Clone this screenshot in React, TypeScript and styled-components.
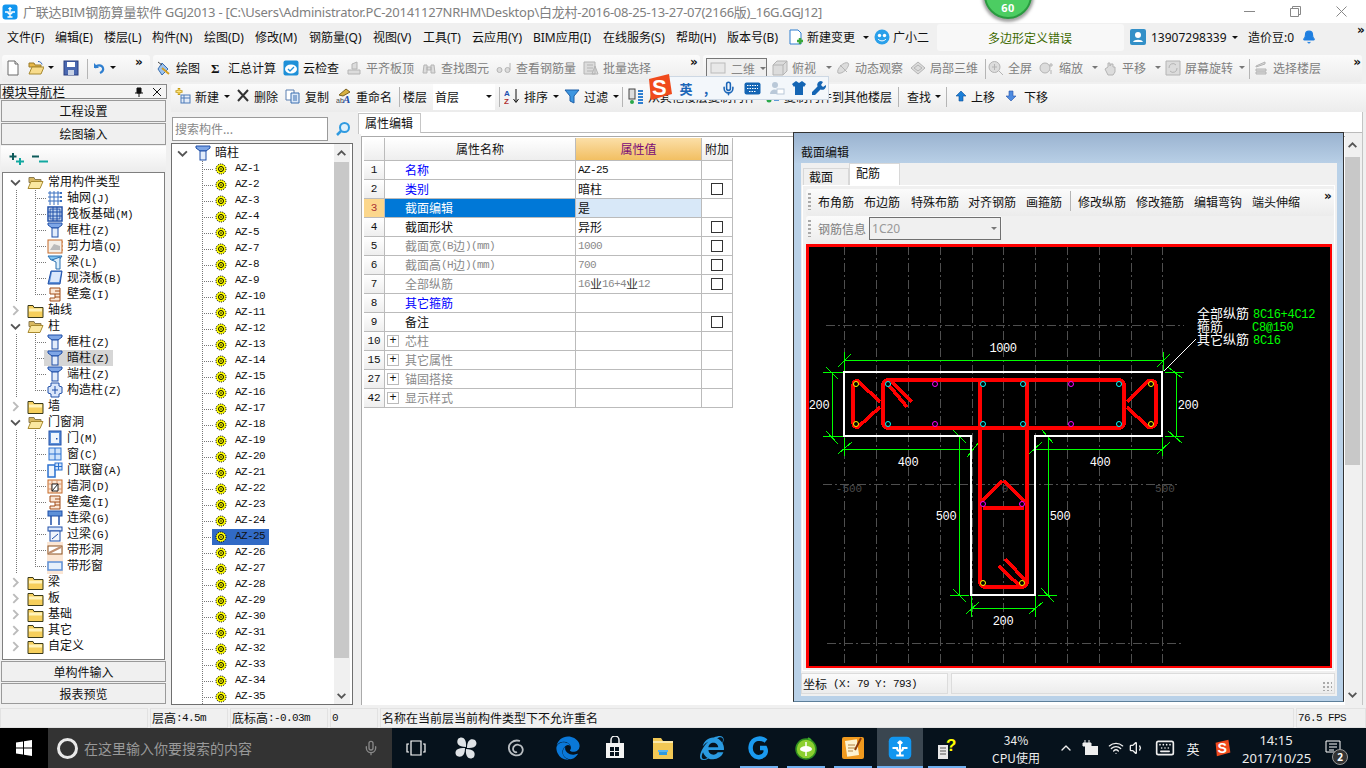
import React from 'react';
import styled, { createGlobalStyle } from 'styled-components';
import { FaEdge, FaInternetExplorer } from 'react-icons/fa';
import { ChevronUp, Volume1, Wifi, Keyboard, Mic, Bell } from 'lucide-react';

const CJK = `"Noto Sans CJK SC", "Noto Sans", sans-serif`;
const UI = `"Noto Sans", "Noto Sans CJK SC", sans-serif`;
const MONO = `"Liberation Mono", "Noto Sans CJK SC", monospace`;

const Global = createGlobalStyle`
  html, body { margin: 0; padding: 0; background: #f0f0f0; overflow: hidden; }
  body { font-family: ${CJK}; font-size: 12px; color: #111; }
  * { box-sizing: border-box; }
`;

const Root = styled.div`
  position: relative; width: 1366px; height: 768px; overflow: hidden;
  display: flex; flex-direction: column; background: #f0f0f0;
`;
const I = styled.svg<{ $s?: number }>`
  flex: none; width: ${p => p.$s ?? 16}px; height: ${p => p.$s ?? 16}px; display: block;
`;
const Gap = styled.span<{ $w: number }>`flex: none; width: ${p => p.$w}px;`;

/* ---------- title bar ---------- */
const TitleBar = styled.div`
  height: 23px; background: #fff; display: flex; align-items: center; padding-left: 2px; flex: none;
`;
const TitleText = styled.div`
  margin-left: 5px; color: #808080; font-family: ${UI}; font-size: 13px; white-space: nowrap; letter-spacing: -0.25px;
`;
const WinBtns = styled.div`margin-left: auto; display: flex; color: #777; padding-right: 2px;`;
const WinBtn = styled.div`width: 46px; height: 23px; display: flex; align-items: center; justify-content: center;`;
const Badge60 = styled.div`
  position: absolute; left: 984px; top: -29px; width: 48px; height: 48px; border-radius: 50%;
  background: #4ccd62; border: 2px solid #2a9a40; box-shadow: 0 1px 3px 2px rgba(90,90,90,.55);
  color: #fff; font: bold 11px "Noto Sans", sans-serif; display: flex; align-items: flex-end; justify-content: center; padding-bottom: 2px; letter-spacing: .5px;
`;

/* ---------- menu ---------- */
const MenuBar = styled.div`
  height: 31px; flex: none; display: flex; align-items: center; padding: 0 0 3px 7px; background: #f0f0f0;
  font-family: ${UI}; font-size: 12px; white-space: nowrap;
`;
const MenuItem = styled.div<{ $w: number; $gap?: number }>`width: ${p => p.$w}px; flex: none; display: flex; align-items: center; gap: ${p => p.$gap ?? 3}px;`;
const Notice = styled.div`
  width: 187px; height: 27px; flex: none; background: #f8f8f8; border-radius: 3px; color: #3e6a00; font-family: ${CJK};
  padding-left: 51px; display: flex; align-items: center; margin-right: 6px; font-size: 12px;
`;
const Caret = styled.span<{ $ml?: number; $c?: string }>`
  flex: none; display: inline-block; width: 0; height: 0; margin-left: ${p => p.$ml ?? 4}px;
  border-left: 3px solid transparent; border-right: 3px solid transparent; border-top: 3px solid ${p => p.$c ?? '#111'};
`;
const More = styled.span<{ $ml?: string; $mr?: number }>`
  flex: none; font: bold 12px/8px "DejaVu Sans", sans-serif; color: #111; letter-spacing: -1px; align-self: flex-start; margin-top: 3px;
  margin-left: ${p => p.$ml ?? '0'}; margin-right: ${p => p.$mr ?? 0}px;
`;

/* ---------- toolbars ---------- */
const Toolbar1 = styled.div`
  height: 30px; flex: none; display: flex; gap: 3px; padding: 1px 4px 2px 2px; white-space: nowrap;
`;
const Band = styled.div<{ $w?: number }>`
  ${p => p.$w ? `width:${p.$w}px; flex:none;` : 'flex:1;'}
  display: flex; align-items: center; padding-left: 3px; border-radius: 3px;
  background: linear-gradient(#fbfbfb, #ececec);
`;
const Tool = styled.div<{ $w: number; $off?: boolean }>`
  width: ${p => p.$w}px; flex: none; display: flex; align-items: center; gap: 4px; height: 22px; padding-bottom: 2px;
  color: ${p => p.$off ? '#808080' : '#111'};
`;
const ToolLabel = styled.span<{ $ml: number }>`margin-left: ${p => p.$ml}px;`;
const Sep = styled.span<{ $m?: number; $mr?: number }>`
  flex: none; width: 1px; height: 20px; background: #b5b5b5; margin: 0 ${p => p.$mr ?? p.$m ?? 5}px 0 ${p => p.$m ?? 5}px;
`;
const ViewCombo = styled.div`
  width: 61px; height: 22px; flex: none; border: 1px solid #777; display: flex; align-items: center; color: #888;
  padding: 0 0 1px 3px; gap: 5px; background: #efefef; margin-right: 5px;
`;

/* ---------- body ---------- */
const Body = styled.div`height: 621px; flex: none; display: flex;`;
const Nav = styled.div`width: 167px; flex: none; display: flex; flex-direction: column; padding: 0 1px;`;
const NavHead = styled.div`
  height: 15px; flex: none; border: 1px solid #8a8a8a; margin: 0 -1px; background: #f4f4f4; display: flex; align-items: center; padding-left: 1px; font-size: 12.6px; line-height: 12px;
`;
const NavHeadIcons = styled.div`margin-left: auto; display: flex; gap: 8px; padding-right: 4px; align-items: center;`;
const NavBtn = styled.div<{ $h?: number }>`
  height: ${p => p.$h ?? 22}px; flex: none; margin-top: 1px; border: 1px solid #9a9a9a; background: #f0f0f0;
  display: flex; align-items: center; justify-content: center; font-size: 12px; padding-bottom: 1px;
`;
const NavTools = styled.div`
  height: 26px; flex: none; display: flex; align-items: center; gap: 3px; padding-left: 7px; background: linear-gradient(#fff,#ececec); margin-top: 1px;
`;
const TreeBox = styled.div`
  height: 488px; flex: none; border: 1px solid #7f7f7f; background: #fff; margin: 0 1px; overflow: hidden; font-size: 12px; padding-top: 1px;
`;
const Row = styled.div<{ $lv1?: boolean; $lv2?: boolean; $last?: boolean }>`
  height: 16px; display: flex; align-items: center; white-space: nowrap;
  background-repeat: no-repeat;
  background-image:
    ${p => p.$lv1 ? 'repeating-linear-gradient(to bottom,#777 0 1px,transparent 1px 2px)' : 'none'},
    ${p => p.$lv2 ? 'repeating-linear-gradient(to bottom,#777 0 1px,transparent 1px 2px)' : 'none'},
    ${p => p.$lv2 ? 'repeating-linear-gradient(to right,#777 0 1px,transparent 1px 2px)' : 'none'};
  background-size: 1px 16px, 1px ${p => p.$last ? '8px' : '16px'}, 11px 1px;
  background-position: 13px 0, 32px 0, 32px 8px;
`;
const ChevBox = styled.span`flex: none; width: 12px; margin-left: 6px; display: flex; justify-content: center;`;
const FolderName = styled.span`margin-left: 4px; height: 16px; line-height: 14px;`;
const LeafWrap = styled.span<{ $sel?: boolean }>`
  flex: none; margin-left: 41px; padding: 0 4px 0 3px; height: 16px; display: flex; align-items: center;
  background: ${p => p.$sel ? '#d6d6d6' : 'transparent'};
`;
const LeafName = styled.span`margin-left: 4px; height: 16px; line-height: 14px;`;
const Lat = styled.span`font-family: ${MONO}; font-size: 11px; letter-spacing: -0.6px;`;

const RightCol = styled.div`width: 1195px; margin-left: 4px; flex: none; display: flex; flex-direction: column;`;
const Toolbar2 = styled.div`
  height: 28px; flex: none; display: flex; align-items: center; padding: 0 0 2px 4px; white-space: nowrap; border-radius: 3px 0 0 0;
  background: linear-gradient(#fbfbfb, #ececec);
`;
const FloorLabel = styled.span`margin-left: 3px; flex: none; margin-bottom: 2px;`;
const FloorBox = styled.div`
  width: 62px; height: 26px; flex: none; margin-left: 6px; background: #fff; padding: 0 0 2px 2px; display: flex; align-items: center;
`;
const Work = styled.div`flex: 1; display: flex; min-height: 0;`;
const TreeCol = styled.div`width: 182px; flex: none; display: flex; flex-direction: column;`;
const SearchRow = styled.div`height: 31px; flex: none; display: flex; align-items: center; gap: 7px; padding: 2px 0 0 1px;`;
const SearchBox = styled.div`
  width: 156px; height: 24px; background: #fff; border: 1px solid #9a9a9a; color: #888; padding: 0 0 1px 2px; display: flex; align-items: center; font-size: 12px;
`;
const CompBox = styled.div`flex: 1; min-height: 0; border: 1px solid #6f6f6f; background: #fff; display: flex;`;
const CompList = styled.div`width: 162px; flex: none; padding-top: 1px; overflow: hidden;`;
const CompRoot = styled.div`height: 16px; display: flex; align-items: center; padding-left: 5px;`;
const CompRootName = styled.span`margin-left: 4px; height: 16px; line-height: 13px;`;
const CompRow = styled.div`
  height: 16px; display: flex; align-items: center; padding-left: 43px; white-space: nowrap;
  background-repeat: no-repeat;
  background-image: repeating-linear-gradient(to bottom,#777 0 1px,transparent 1px 2px), repeating-linear-gradient(to right,#777 0 1px,transparent 1px 2px);
  background-size: 1px 16px, 11px 1px; background-position: 30px 0, 30px 8px;
`;
const CompName = styled.span<{ $sel?: boolean }>`
  font-family: ${MONO}; font-size: 11px; letter-spacing: -0.6px; height: 16px; line-height: 15px; margin-left: -15px; padding: 0 4px 0 23px;
  background: ${p => p.$sel ? '#316ac5' : 'transparent'};
`;
const GearWrap = styled.span`position: relative; z-index: 1; flex: none; width: 12px; height: 12px; display: block;`;
const Scroll = styled.div<{ $w: number }>`width: ${p => p.$w}px; flex: none; background: #f0f0f0; display: flex; flex-direction: column; align-items: flex-start;`;
const SBtn = styled.div<{ $h: number }>`height: ${p => p.$h}px; flex: none; display: flex; align-items: center; justify-content: center; width: 15px;`;
const SThumb = styled.div<{ $h: number }>`height: ${p => p.$h}px; width: 15px; flex: none; background: #c8c8c8;`;
const SFill = styled.div`flex: 1;`;

const PropCol = styled.div`width: 1006px; margin-left: 4px; flex: none; display: flex; flex-direction: column; border-right: 1px solid #c4c4c4;`;
const TabStrip = styled.div`height: 21px; flex: none; display: flex; background: #fff; border-bottom: 1px solid #bbb; margin-left: 1px;`;
const TabOn = styled.div`
  width: 63px; flex: none; margin-top: 1px; height: 21px; background: #fff; border: 1px solid #c6c6c6; border-bottom: none; display: flex; align-items: center; padding: 0 0 3px 6px; font-size: 12px;
`;
const PropBody = styled.div`flex: 1; min-height: 0; display: flex; background: #fff; margin-left: 4px;`;
const GridArea = styled.div`flex: 1; border-left: 1px solid #aaa; border-top: 1px solid #aaa; margin-top: 3px; padding: 1px 0 0 2px;`;
const GRow = styled.div<{ $h?: number }>`display: flex; height: ${p => p.$h ?? 19}px;`;
const Cell = styled.div<{ $w: number; $bg?: string; $c?: string; $pl?: number }>`
  width: ${p => p.$w}px; flex: none; background: ${p => p.$bg ?? '#fff'}; color: ${p => p.$c ?? '#111'};
  border-right: 1px solid #bbb; border-bottom: 1px solid #bbb; display: flex; align-items: center;
  padding: 0 0 1px ${p => p.$pl ?? 0}px; white-space: nowrap; font-size: 12px;
`;
const HeadCell = styled(Cell)`justify-content: center;`;
const RowNum = styled(HeadCell)<{ $hot?: boolean }>`
  font-family: ${MONO}; font-size: 11px; background: ${p => p.$hot ? '#fcd78c' : 'linear-gradient(#fff,#eee)'};
  color: ${p => p.$hot ? '#a33' : '#111'};
`;
const Check = styled.span`width: 12px; height: 12px; border: 1px solid #333; background: #fff; margin-left: 9px; flex: none;`;
const PlusBox = styled.span`
  width: 12px; height: 12px; flex: none; border: 1px solid #bbb; color: #111; margin: 0 6px 0 2px; font: 12px/9px "Liberation Sans", sans-serif; text-align: center;
`;
const Mono = styled.span`font-family: ${MONO}; font-size: 11px; letter-spacing: -0.6px;`;
const RebarMark = styled.span`color: #333;`;

/* ---------- dialog ---------- */
const Dialog = styled.div`
  position: absolute; left: 793px; top: 132px; width: 551px; height: 570px; border: 1px solid #333; border-bottom-color: #5d7f9a;
  background: #b9d1e8; display: flex; flex-direction: column; z-index: 3; font-size: 12px;
`;
const DTitle = styled.div`
  height: 30px; flex: none; background: linear-gradient(#9ab3d0,#b8cfe6); padding: 10px 0 0 7px; line-height: 18px;
`;
const DInner = styled.div`height: 533px; flex: none; margin: 0 6px 0 7px; background: #f0f0f0; display: flex; flex-direction: column;`;
const DTabs = styled.div`height: 22px; flex: none; display: flex; align-items: flex-end; padding-left: 2px;`;
const DTab = styled.div<{ $on?: boolean }>`
  width: ${p => p.$on ? 51 : 46}px; height: ${p => p.$on ? 22 : 17}px; flex: none; background: ${p => p.$on ? '#fff' : '#f0f0f0'};
  border: 1px solid #d8d8d8; border-bottom: none; padding: ${p => p.$on ? '0 0 4px 6px' : '0 0 2px 5px'}; display: flex; align-items: center;
`;
const DPanel = styled.div`
  height: 486px; flex: none; margin: 0 2px 0 1px; background: #f0f0f0; border: 1px solid #fff; padding: 0 0 0 3px; display: flex; flex-direction: column;
`;
const DBar = styled.div`
  height: 27px; flex: none; margin-top: 3px; display: flex; align-items: center; white-space: nowrap; background: linear-gradient(#fbfbfb,#ececec); border-radius: 3px; padding: 0 0 3px 2px;
`;
const DBarItem = styled.span<{ $w: number }>`width: ${p => p.$w}px; flex: none;`;
const Grip = styled.span`flex: none; width: 3px; height: 17px; margin-right: 7px; background: repeating-linear-gradient(to bottom,#aaa 0 2px,transparent 2px 4px);`;
const DBar2 = styled.div`
  width: 196px; height: 28px; flex: none; display: flex; align-items: center; padding: 0 0 4px 2px; background: linear-gradient(#fbfbfb,#ececec); color: #808080; white-space: nowrap; border-radius: 3px;
`;
const RebarCombo = styled.div`
  width: 132px; height: 23px; flex: none; margin-left: 3px; border: 1px solid #707070; background: #f0f0f0; display: flex; align-items: center; justify-content: space-between; padding: 0 3px 0 2px; font-family: ${UI}; color: #999;
`;
const Canvas = styled.svg`
  width: 526px; height: 424px; display: block; flex: none; background: #000;
`;
const DStatus = styled.div`height: 21px; flex: none; margin-top: 2px; display: flex; gap: 3px;`;
const DCell = styled.div<{ $w: number }>`
  width: ${p => p.$w}px; flex: none; background: linear-gradient(#fbfbfb,#ececec); border: 1px solid #dcdcdc; display: flex; align-items: center; padding-left: 1px; position: relative;
`;
const GripC = styled.span`
  position: absolute; right: 2px; bottom: 2px; width: 10px; height: 10px;
  background: radial-gradient(circle, #aaa 1px, transparent 1.3px) 0 0/4px 4px;
`;
const Dim = styled.text`fill: #fff; font-family: ${MONO}; font-size: 12px; letter-spacing: -0.4px; text-anchor: middle;`;
const Ax = styled.text`fill: #4a4a4a; font-family: ${MONO}; font-size: 11px; text-anchor: middle;`;
const Lbl = styled.text`fill: #fff; font-family: ${CJK}; font-size: 13px;`;
const Val = styled.text`fill: #00ff00; font-family: ${MONO}; font-size: 12px; letter-spacing: -0.3px;`;

/* ---------- sogou ---------- */
const Sogou = styled.div`
  position: absolute; left: 668px; top: 76px; width: 161px; height: 24px; background: #f3f7fb; border: 1px solid #cdd8e4; z-index: 4;
  display: flex; align-items: center; padding-left: 8px; color: #1b66b8; font-weight: 700; font-size: 13px;
`;
const SogouSlot = styled.span<{ $w: number }>`width: ${p => p.$w}px; flex: none; display: flex; justify-content: center;`;
const SogouLogo = styled.div`position: absolute; left: 645px; top: 73px; width: 28px; height: 26px; z-index: 5;`;

/* ---------- status + taskbar ---------- */
const Status = styled.div`height: 20px; margin-top: 3px; flex: none; display: flex; gap: 2px; font-size: 12px;`;
const SCell = styled.div<{ $w?: number }>`
  ${p => p.$w ? `width:${p.$w}px; flex:none;` : 'flex:1;'}
  background: #f0f0f0; border: 1px solid #e2e2e2; display: flex; align-items: center; padding: 0 0 1px 1px; white-space: nowrap;
`;
const Taskbar = styled.div`height: 40px; flex: none; background: #06121c; display: flex; color: #fff; position: relative;`;
const StartBtn = styled.div`width: 48px; flex: none; background: #000; display: flex; align-items: center; justify-content: center;`;
const SearchTask = styled.div`
  width: 344px; flex: none; background: #333; display: flex; align-items: center; padding-left: 9px; color: #999; font-size: 14px; gap: 6px;
`;
const Ring = styled.span`width: 21px; height: 21px; border-radius: 50%; border: 3px solid #e8e8e8; flex: none;`;
const MicBox = styled.span`margin-left: auto; margin-right: 13px; color: #888; display: flex;`;
const TaskIcons = styled.div`display: flex; flex: none;`;
const TaskIcon = styled.div<{ $w: number; $ml?: number; $on?: boolean; $active?: boolean }>`
  width: ${p => p.$w}px; height: 40px; flex: none; margin-left: ${p => p.$ml ?? 0}px; display: flex; align-items: center; justify-content: center;
  background: ${p => p.$active ? '#3a4650' : 'transparent'};
  box-shadow: ${p => p.$on ? 'inset 0 -2px 0 #70b0f0' : 'none'};
`;
const Cpu = styled.div`
  width: 64px; flex: none; margin-left: 18px; text-align: center; font-size: 12px; line-height: 18px; padding-top: 3px; color: #eee;
`;
const Tray = styled.div`display: flex; align-items: center; flex: none; margin-left: 6px; color: #eee;`;
const TraySlot = styled.span<{ $w: number }>`width: ${p => p.$w}px; flex: none; display: flex; justify-content: center; font-size: 13px;`;
const Clock = styled.div`
  width: 68px; flex: none; text-align: center; font-family: ${UI}; font-size: 13px; line-height: 18px; padding-top: 3px; color: #eee; white-space: nowrap;
`;
const Notify = styled.div`flex: none; margin-left: 12px; width: 30px; position: relative; display: flex; align-items: center; padding-left: 3px;`;
const NotifyBadge = styled.span`
  position: absolute; left: 10px; top: 21px; width: 16px; height: 16px; border-radius: 50%; background: #333; border: 1px solid #999;
  color: #fff; font: bold 10px/14px "Noto Sans", sans-serif; text-align: center;
`;

/* ---------- icons ---------- */
const AppIcon = ({ s = 16 }: { s?: number }) => (
  <I $s={s} viewBox="0 0 16 16"><rect x=".5" y=".5" width="15" height="15" rx="3" fill="#1296ef" /><path d="M8 3v10M3 8h3a2 2 0 0 0 4 0h3M8 3.5L6.5 5M8 3.5L9.5 5M5.5 13h5" stroke="#fff" strokeWidth="1.4" fill="none" /></I>
);
const NewDoc = () => <I viewBox="0 0 16 16"><path d="M3 1h7l3 3v11H3z" fill="#fff" stroke="#6a6a6a" /><path d="M10 1v3h3" fill="#e8e8e8" stroke="#6a6a6a" /></I>;
const OpenF = () => <I viewBox="0 0 16 16"><path d="M1 3h5l1 2h6v2H1z" fill="#e7b84a" stroke="#9a7a28" /><path d="M1 14l3-7h12l-3 7z" fill="#f8dc8c" stroke="#a88a30" /><path d="M10 1.5c2 0 3.5 1 4 3" stroke="#2b5fb3" fill="none" /></I>;
const Save = () => <I viewBox="0 0 16 16"><rect x="1" y="1" width="14" height="14" fill="#4a68b0" stroke="#2a3f80" /><rect x="4" y="2" width="8" height="5" fill="#fff" /><rect x="5" y="10" width="6" height="5" fill="#c9d3e6" /></I>;
const Undo = () => <I viewBox="0 0 16 16"><path d="M4 3v5h5" fill="#2f7fd0" /><path d="M5 8c2-4 7-3 8 0 .6 2-1 4-3 5" fill="none" stroke="#2f7fd0" strokeWidth="2.2" /></I>;
const Draw = () => <I viewBox="0 0 16 16"><path d="M2 9l4-6 6 6-6 6z" fill="#9cc2ee" stroke="#3a6fb0" /><path d="M6 8l7 6" stroke="#d8a020" strokeWidth="2" /><path d="M2 2l4 3" stroke="#444" /></I>;
const SigmaI = () => <I viewBox="0 0 16 16"><text x="3" y="13" fontSize="13" fontWeight="700" fontFamily="Liberation Serif, serif" fill="#111">Σ</text></I>;
const CloudC = () => <I viewBox="0 0 16 16"><rect x=".5" y=".5" width="15" height="15" rx="2" fill="#1e90d8" /><ellipse cx="8" cy="9" rx="6" ry="4.5" fill="#fff" /><path d="M5 9l2 2 4-4" stroke="#1e90d8" strokeWidth="1.3" fill="none" /></I>;
const Gray = ({ d }: { d: string }) => <I viewBox="0 0 16 16"><path d={d} fill="#dcdcdc" stroke="#b4b4b4" /></I>;
const GFlat = 'M2 14h12v-4H2zM6 9V4l5-2v7z';
const GBino = 'M2 13l1-8h3v8zM10 13V5h3l1 8zM6 7h4v3H6z';
const GGlass = 'M1 10a2.500 2.500 0 1 0 5 0a2.500 2.500 0 1 0-5 0M9 10a2.500 2.500 0 1 0 5 0a2.500 2.500 0 1 0-5 0M14 10V3';
const GBatch = 'M1 2h11v12H1zM4 5h6M4 8h6M4 11h6M12 6l3 8H9z';
const GBox = 'M1 5l4-4h10v10l-4 4H1zM1 5h10v10M11 5l4-4';
const GOrbit = 'M3 13C1 9 9 1 13 3c3 2-5 12-10 10zM5 5l7 7';
const GLocal = 'M1 8l7-6 7 6-7 6zM4 8l4-3 4 3-4 3z';
const GZoom = 'M1 7a5.500 5.500 0 1 0 11 0a5.500 5.500 0 1 0-11 0M11 11l4 4M6.500 4v6M4 7h5';
const GScale = 'M1 8a5 5 0 1 0 10 0a5 5 0 1 0-10 0M12 3v4M10 5h4M12 10v4';
const GPan = 'M3 9l3-2V3h2v3l1-2h2v3h2v5l-2 3H6z';
const GRot = 'M1 1h14v14H1zM4 8a4 4 0 0 1 7-3M12 8a4 4 0 0 1-7 3';
const GFloor = 'M3 6l9-4v2l-9 3zM3 9h10v2H3zM3 12h10v2H3z';
const NewIt = () => <I viewBox="0 0 16 16"><rect x="6" y="7" width="9" height="8" fill="#e4ecf7" stroke="#4d7ab8" /><path d="M6 10h9M9 7v8" stroke="#4d7ab8" /><path d="M4 0v7M.5 3.500h7" stroke="#c49a10" strokeWidth="2.500" /><path d="M4 1v5M1.500 3.500h5" stroke="#ffe680" /></I>;
const CrossI = () => <I $s={14} viewBox="0 0 14 14"><path d="M2 1l10 11M12 1L2 12" stroke="#333" strokeWidth="2" /></I>;
const CopyI = () => <I viewBox="0 0 16 16"><path d="M1 2h8v10H1z" fill="#fff" stroke="#5a7fb0" /><path d="M6 5h8v10H6z" fill="#dbe8f8" stroke="#3a6fb0" /><path d="M8 8h4M8 10h4M8 12h4" stroke="#3a6fb0" /></I>;
const Rename = () => <I viewBox="0 0 16 16"><path d="M3 7l7-6 4 3-7 4z" fill="#d8b040" stroke="#7a6020" /><text x="0" y="15" fontSize="7" fontFamily="Liberation Sans" fill="#444">ab</text><text x="7" y="15" fontSize="11" fontWeight="700" fontFamily="Liberation Serif" fontStyle="italic" fill="#1f4fa8">A</text></I>;
const SortI = () => <I viewBox="0 0 16 16"><text x="0" y="8" fontSize="8" fontWeight="700" fontFamily="Liberation Sans" fill="#2050b0">A</text><text x="0" y="15.500" fontSize="8" fontWeight="700" fontFamily="Liberation Sans" fill="#b03030">Z</text><path d="M12 1v13M9.500 11l2.500 3.500 2.500-3.500" stroke="#111" fill="none" /></I>;
const Funnel = () => <I viewBox="0 0 16 16"><path d="M1 2h14l-5 6v7l-4-2V8z" fill="#3d96e0" stroke="#1d5fa8" /></I>;
const CopyFrom = () => <I viewBox="0 0 16 16"><rect x="1" y="1" width="6" height="10" fill="#ddd" stroke="#444" /><path d="M10 3h5M10 6h5M10 9h5M10 12h5M10 15h5" stroke="#2f7fd0" strokeWidth="2" /><circle cx="4" cy="14" r="2" fill="#2aa84a" /></I>;
const CopyTo = () => <I $s={14} viewBox="0 0 14 14"><path d="M8 2h5M8 5h5M8 8h5M8 11h5" stroke="#2f7fd0" strokeWidth="1.500" /><circle cx="3" cy="11" r="2.500" fill="#2aa84a" /></I>;
const Up = () => <I $s={12} viewBox="0 0 12 12"><path d="M6 1l5 5H8v5H4V6H1z" fill="#1b7fd8" stroke="#0d4f98" strokeWidth=".6" /></I>;
const Down = () => <I $s={12} viewBox="0 0 12 12"><path d="M6 11L1 6h3V1h4v5h3z" fill="#4d8be0" stroke="#2855a8" strokeWidth=".6" /></I>;
const Chev = ({ open, s = 11 }: { open: boolean; s?: number }) => (
  <I $s={s} viewBox="0 0 10 10"><path d={open ? 'M1 3l4 4 4-4' : 'M3 1l4 4-4 4'} stroke={open ? '#555' : '#bbb'} strokeWidth="1.700" fill="none" /></I>
);
const FolderC = () => <I $s={17} viewBox="0 0 17 16"><path d="M1 3h5l1 2h9v10H1z" fill="#f6cf5c" stroke="#3a3a1a" /><path d="M2 6h13v3H2z" fill="#fff2b8" /></I>;
const FolderO = () => <I $s={17} viewBox="0 0 17 16"><path d="M2 3h5l1 2h6v3H2z" fill="#d8b860" stroke="#8a7a50" /><path d="M1 14l3-7h12l-3 7z" fill="#fbe8a0" stroke="#a88a30" /></I>;
const Col = () => <I viewBox="0 0 16 16"><path d="M1 1h14v2l-4 3H5L1 3z" fill="#7ea6e6" stroke="#1f4fa8" /><rect x="5" y="6" width="6" height="9" fill="#e2ecfb" stroke="#1f4fa8" /></I>;
const GridI = () => <I viewBox="0 0 16 16"><path d="M3 1v14M7 1v14M11 1v14M1 3h12M1 7h12M1 11h12" stroke="#3a70c0" /><rect x="13" y="2" width="2" height="2" fill="#3a70c0" /><rect x="13" y="6" width="2" height="2" fill="#3a70c0" /><rect x="13" y="10" width="2" height="2" fill="#3a70c0" /></I>;
const Raft = () => <I viewBox="0 0 16 16"><rect x="1" y="1" width="14" height="14" fill="#fff" stroke="#1f4fa8" strokeWidth="1.500" /><rect x="3" y="3" width="10" height="10" fill="#bcd2ee" stroke="#1f4fa8" /><path d="M6 1v14M10 1v14M1 6h14M1 10h14" stroke="#1f4fa8" /></I>;
const Shear = () => <I viewBox="0 0 16 16"><rect x="1" y="2" width="14" height="13" fill="#f4f0ea" stroke="#c66a28" /><path d="M3 12h10V8L7 6z" fill="#bbb" /><path d="M15 4h1M15 8h1M15 12h1" stroke="#c66a28" /></I>;
const Beam = () => <I viewBox="0 0 16 16"><path d="M1 2h14l-3 4H4z" fill="#7ec0ee" stroke="#2a70b0" /><path d="M5 6l8-3v12H9V8z" fill="#dbeefb" stroke="#2a70b0" /></I>;
const Slab = () => <I viewBox="0 0 16 16"><path d="M4 1h11l-2 13H1z" fill="#5d90d8" stroke="#1f4fa8" /><path d="M5 2h9l-2 10H3z" fill="#dbe7fb" /></I>;
const Niche = () => <I viewBox="0 0 16 16"><path d="M3 2h10v13H3v-3h5V8H3z" fill="#fbe6d4" stroke="#a04d18" /><path d="M8 5h5M8 8h5M8 11h5" stroke="#a04d18" /></I>;
const Constr = () => <I viewBox="0 0 16 16"><path d="M4 1h8v3l3 1v6l-3 1v3H4v-3l-3-1V5l3-1z" fill="#dbe7fb" stroke="#1f4fa8" /><path d="M8 4v8M5 8h6" stroke="#1f4fa8" /></I>;
const Door = () => <I viewBox="0 0 16 16"><rect x="2" y="1" width="12" height="14" fill="#5d90d8" stroke="#1f4fa8" /><rect x="4" y="3" width="8" height="10" fill="#f0f5fc" /><rect x="9" y="8" width="1.500" height="1.500" fill="#1f4fa8" /></I>;
const WinI = () => <I viewBox="0 0 16 16"><rect x="2" y="2" width="12" height="12" fill="#cfe3fa" stroke="#2a70d0" /><path d="M8 2v12M2 8h12" stroke="#2a70d0" /></I>;
const DoorWin = () => <I viewBox="0 0 16 16"><rect x="1" y="3" width="7" height="12" fill="#f0f5fc" stroke="#2a70d0" strokeWidth="1.500" /><rect x="8" y="1" width="7" height="7" fill="#cfe3fa" stroke="#2a70d0" /><path d="M11.500 1v7M8 4.500h7" stroke="#2a70d0" /></I>;
const Hole = () => <I viewBox="0 0 16 16"><rect x="1" y="2" width="14" height="13" fill="#fbe6d4" stroke="#c66a28" /><path d="M5 2v13M10 2v13M1 6h14M1 11h14" stroke="#d8936a" /><path d="M5 13V6h6v7zM5 13l6-7" stroke="#222" fill="#fff" /></I>;
const LBeam = () => <I viewBox="0 0 16 16"><rect x="1" y="1" width="14" height="5" fill="#5d90d8" stroke="#1f4fa8" /><path d="M4 6v9M12 6v9" stroke="#1f4fa8" strokeWidth="1.500" /></I>;
const Lintel = () => <I viewBox="0 0 16 16"><rect x="1" y="1" width="14" height="4" fill="#dbe7fb" stroke="#1f4fa8" /><rect x="3" y="5" width="10" height="10" fill="#f0f5fc" stroke="#1f4fa8" /><path d="M5 13l6-5" stroke="#1f4fa8" /></I>;
const BandH = () => <I viewBox="0 0 16 16"><rect x="0" y="0" width="16" height="16" fill="#fbe6d4" /><rect x="1" y="4" width="14" height="8" fill="#fff" stroke="#8a5020" /><path d="M2 11l12-6" stroke="#c09070" strokeWidth="2" /></I>;
const BandW = () => <I viewBox="0 0 16 16"><rect x="0" y="0" width="16" height="16" fill="#fbe6d4" /><rect x="1" y="4" width="14" height="8" fill="#e6f0fb" stroke="#5d90d8" strokeWidth="1.500" /></I>;
const Gear = () => (
  <I $s={12} viewBox="0 0 12 12"><circle cx="6" cy="6" r="5" fill="#ffff00" stroke="#000" strokeDasharray="1.200 1" /><circle cx="6" cy="6" r="2.500" fill="#ffff00" stroke="#000" /><circle cx="6" cy="6" r=".8" fill="#000" /></I>
);
const PlusPlus = () => <I $s={20} viewBox="0 0 20 20"><path d="M5 4v7M1.500 7.500h7" stroke="#0d5a5a" strokeWidth="2" /><path d="M12 9v7M8 12.500h8" stroke="#12a8a0" strokeWidth="2" /></I>;
const MinusMinus = () => <I $s={20} viewBox="0 0 20 20"><path d="M1 7.500h7" stroke="#0d5a5a" strokeWidth="2" /><path d="M8 12.500h9" stroke="#12a8a0" strokeWidth="2" /></I>;
const Glass = () => <I viewBox="0 0 16 16"><circle cx="9.500" cy="6.500" r="4.500" fill="#dff0fb" stroke="#2f9ae0" strokeWidth="2" /><path d="M6 10l-4 4" stroke="#2f9ae0" strokeWidth="2.500" /></I>;
const Pin = () => <I $s={10} viewBox="0 0 10 10"><path d="M3 1h4v5H3zM1 6h8M5 6v4" stroke="#111" fill="#111" /></I>;
const CloseX = () => <I $s={10} viewBox="0 0 10 10"><path d="M1 1l8 8M9 1L1 9" stroke="#111" /></I>;
const DocGreen = () => <I viewBox="0 0 16 16"><path d="M2 1h8l3 3v11H2z" fill="#fff" stroke="#2f7fd0" /><path d="M9 12h6M12 9v6" stroke="#3aa83a" strokeWidth="2.500" /></I>;
const Mascot = () => <I viewBox="0 0 16 16"><circle cx="8" cy="8" r="7.500" fill="#2aa0ea" /><circle cx="5.500" cy="6.500" r="1.700" fill="#fff" /><circle cx="10.500" cy="6.500" r="1.700" fill="#fff" /><path d="M4 10c2 2.500 6 2.500 8 0" stroke="#fff" fill="none" /></I>;
const UserI = () => <I viewBox="0 0 16 16"><rect width="16" height="16" rx="2" fill="#3390c8" /><circle cx="8" cy="6" r="3" fill="#fff" /><path d="M3 13c1-3 9-3 10 0z" fill="#fff" /></I>;

const WinLogo = () => <I viewBox="0 0 16 16"><path d="M0 2.500l7-1v6H0zM8 1.300L16 0v7.500H8zM0 8.500h7v6l-7-1zM8 8.500h8V16L8 14.700z" fill="#fff" /></I>;
const TaskView = () => <I $s={20} viewBox="0 0 20 20"><path d="M5 3h10v14H5zM3 6H1v8h2M17 6h2v8h-2" stroke="#fff" fill="none" strokeWidth="1.200" /></I>;
const Fan = () => <I $s={24} viewBox="0 0 24 24"><path d="M12 11C4 11 2 7 4 3c3-3 9-2 8 8zM13 12c0-8 4-10 8-8 3 3 2 9-8 8zM12 13c8 0 10 4 8 8-3 3-9 2-8-8zM11 12c0 8-4 10-8 8-3-3-2-9 8-8z" fill="#dfe3e6" /></I>;
const Spiral = () => <I $s={22} viewBox="0 0 22 22"><path d="M15 4C8 2 3 7 4 12c1 6 8 8 12 5 3-3 2-8-2-9-3-1-6 1-6 4 0 2 2 4 4 3" stroke="#b9bec2" strokeWidth="1.800" fill="none" /></I>;
const Store = () => <I $s={24} viewBox="0 0 24 24"><path d="M3 7h18v15H3z" fill="#f4f4f4" /><path d="M8 7V4a4 4 0 0 1 8 0v3" stroke="#f4f4f4" strokeWidth="1.500" fill="none" /><path d="M7 11h4v4H7zM12 11h4v4h-4zM7 16h4v4H7zM12 16h4v4h-4z" fill="#06121c" /></I>;
const FolderT = () => <I $s={24} viewBox="0 0 24 24"><path d="M2 2h8l2 3h10v18H2z" fill="#f2c855" /><path d="M2 6h20" stroke="#fbe8a8" strokeWidth="2" /><path d="M8 19v-5h8v5z" fill="#2f9ae0" /><path d="M7 14h10v2H7z" fill="#59b4f0" /></I>;
const GTask = () => <I $s={24} viewBox="0 0 24 24"><path d="M19 5C14 1 6 2 4 9c-2 8 4 13 9 12 5-1 7-5 5-9h-5" stroke="#1a9af0" strokeWidth="4.500" fill="none" /></I>;
const GreenOrb = () => <I $s={24} viewBox="0 0 24 24"><circle cx="12" cy="13" r="10" fill="#8ccf30" stroke="#2f8f20" strokeWidth="1.500" /><ellipse cx="12" cy="13" rx="6" ry="3" fill="#fff" /><path d="M12 6v14" stroke="#fff" strokeWidth="1.500" /><path d="M14 2l3 2" stroke="#3fae2a" strokeWidth="2" /></I>;
const NotesT = () => <I $s={24} viewBox="0 0 24 24"><rect x="1" y="1" width="22" height="22" rx="2" fill="#f09a1e" /><rect x="5" y="4" width="12" height="16" transform="rotate(-8 11 12)" fill="#fdf3d0" /><path d="M7 9h7M7 12h7M7 15h5" stroke="#b08040" /><path d="M20 2l-6 12" stroke="#8a3a0a" strokeWidth="2" /></I>;
const QTask = () => <I $s={24} viewBox="0 0 24 24"><rect x="3" y="9" width="10" height="14" fill="#e8e8e8" /><path d="M5 12h6M5 15h6M5 18h6" stroke="#555" /><text x="11" y="15" fontSize="17" fontWeight="700" fontFamily="Liberation Sans" fill="#ff0">?</text></I>;
const BatteryI = () => <I $s={18} viewBox="0 0 18 18"><rect x="3" y="7" width="13" height="9" fill="#eee" /><path d="M3 1v5M7 1v5M1 4h8v3H1z" stroke="#eee" fill="#eee" /></I>;
const SLogo = ({ s }: { s: number }) => (
  <I $s={s} viewBox="0 0 28 28"><path d="M4 6l20-5 3 20-21 6z" fill="#f04a1c" /><text x="7" y="22" fontSize="22" fontWeight="700" fontFamily="Liberation Sans" fill="#fff">S</text></I>
);
const Shirt = () => <I $s={16} viewBox="0 0 16 16"><path d="M5 1L1 4l2 3 1-1v9h8V6l1 1 2-3-4-3-3 2z" fill="#1465b4" /></I>;
const Wrench = () => <I $s={16} viewBox="0 0 16 16"><path d="M10 1a4 4 0 0 0-3.500 5.500L1 12v3h3l5.500-5.500A4 4 0 0 0 15 5l-3 2-2-2 2-3z" fill="#1465b4" /></I>;
const PersonG = () => <I $s={16} viewBox="0 0 16 16"><circle cx="6" cy="5" r="3" fill="#b9c8d8" /><path d="M1 14c0-6 9-6 9 0z" fill="#b9c8d8" /><rect x="8" y="9" width="7" height="5" fill="#fff" stroke="#b9c8d8" /></I>;
const KeyB = () => <I $s={17} viewBox="0 0 17 14"><rect x=".5" y="1" width="16" height="12" rx="2" fill="#1465b4" /><path d="M3 4h11M3 7h11M5 10h7" stroke="#fff" strokeDasharray="1.500 1" /></I>;

/* ---------- data ---------- */
const LabelT = ({ t }: { t: string }) => (
  <>{t.split(/([\x00-\x7f]+)/).map((p, i) => (/[\x00-\x7f]/.test(p) ? <Lat key={i}>{p}</Lat> : p))}</>
);

type TreeItem = { kind: 'f'; name: string; open?: boolean } | { kind: 'l'; name: string; icon: React.ReactNode; last?: boolean; sel?: boolean };
const nav: TreeItem[] = [
  { kind: 'f', name: '常用构件类型', open: true },
  { kind: 'l', name: '轴网(J)', icon: <GridI /> },
  { kind: 'l', name: '筏板基础(M)', icon: <Raft /> },
  { kind: 'l', name: '框柱(Z)', icon: <Col /> },
  { kind: 'l', name: '剪力墙(Q)', icon: <Shear /> },
  { kind: 'l', name: '梁(L)', icon: <Beam /> },
  { kind: 'l', name: '现浇板(B)', icon: <Slab /> },
  { kind: 'l', name: '壁龛(I)', icon: <Niche />, last: true },
  { kind: 'f', name: '轴线' },
  { kind: 'f', name: '柱', open: true },
  { kind: 'l', name: '框柱(Z)', icon: <Col /> },
  { kind: 'l', name: '暗柱(Z)', icon: <Col />, sel: true },
  { kind: 'l', name: '端柱(Z)', icon: <Col /> },
  { kind: 'l', name: '构造柱(Z)', icon: <Constr />, last: true },
  { kind: 'f', name: '墙' },
  { kind: 'f', name: '门窗洞', open: true },
  { kind: 'l', name: '门(M)', icon: <Door /> },
  { kind: 'l', name: '窗(C)', icon: <WinI /> },
  { kind: 'l', name: '门联窗(A)', icon: <DoorWin /> },
  { kind: 'l', name: '墙洞(D)', icon: <Hole /> },
  { kind: 'l', name: '壁龛(I)', icon: <Niche /> },
  { kind: 'l', name: '连梁(G)', icon: <LBeam /> },
  { kind: 'l', name: '过梁(G)', icon: <Lintel /> },
  { kind: 'l', name: '带形洞', icon: <BandH /> },
  { kind: 'l', name: '带形窗', icon: <BandW />, last: true },
  { kind: 'f', name: '梁' },
  { kind: 'f', name: '板' },
  { kind: 'f', name: '基础' },
  { kind: 'f', name: '其它' },
  { kind: 'f', name: '自定义' },
];
const comps = Array.from({ length: 35 }, (_, i) => i + 1).filter(n => n !== 6).map(n => `AZ-${n}`);

const menu: [string, number][] = [['文件(F)', 48], ['编辑(E)', 49], ['楼层(L)', 48], ['构件(N)', 52], ['绘图(D)', 51], ['修改(M)', 54], ['钢筋量(Q)', 64], ['视图(V)', 50], ['工具(T)', 49], ['云应用(Y)', 61], ['BIM应用(I)', 70], ['在线服务(S)', 73], ['帮助(H)', 51], ['版本号(B)', 61]];

type PR = { n: string; name: string; c: string; val?: React.ReactNode; chk?: boolean; sel?: boolean; plus?: boolean; vc?: string };
const G = '#8a8a8a';
const rows: PR[] = [
  { n: '1', name: '名称', c: '#0000ff', val: <Mono>AZ-25</Mono> },
  { n: '2', name: '类别', c: '#0000ff', val: '暗柱', chk: true },
  { n: '3', name: '截面编辑', c: '#fff', val: '是', sel: true },
  { n: '4', name: '截面形状', c: '#111', val: '异形', chk: true },
  { n: '5', name: '截面宽(B边)(mm)', c: G, val: <Mono>1000</Mono>, chk: true, vc: G },
  { n: '6', name: '截面高(H边)(mm)', c: G, val: <Mono>700</Mono>, chk: true, vc: G },
  { n: '7', name: '全部纵筋', c: G, val: <><Mono>16</Mono><RebarMark>&#19994;</RebarMark><Mono>16+4</Mono><RebarMark>&#19994;</RebarMark><Mono>12</Mono></>, chk: true, vc: G },
  { n: '8', name: '其它箍筋', c: '#0000ff' },
  { n: '9', name: '备注', c: '#111', chk: true },
  { n: '10', name: '芯柱', c: G, plus: true },
  { n: '15', name: '其它属性', c: G, plus: true },
  { n: '27', name: '锚固搭接', c: G, plus: true },
  { n: '42', name: '显示样式', c: G, plus: true },
];

const gridXs = [844, 876, 908, 940, 972, 1003, 1035, 1067, 1099, 1131, 1162];
const green = [
  'M844 360H1163M844 352V371M1163 352V371M838 367L851 354M1157 367L1170 354',
  'M832 372V436M823 372H843M823 436H843M826 367L838 379M826 431L838 444',
  'M1176 372V436M1165 372H1184M1165 436H1184M1168 367L1182 378M1168 431L1182 443',
  'M844 449H971M844 438V456M971 440V458M838 454L852 442M967 457L979 442',
  'M1035 449H1162M1035 440V458M1162 438V456M1029 454L1042 442M1157 454L1170 442',
  'M959.500 436V595M950 436H970M953 430L966 443M950 595H969M953 589L966 602',
  'M1048.500 436V595M1038 436H1057M1042 430L1053 443M1038 595H1057M1041 588L1054 602',
  'M971 608H1035M971 596V617M1035 596V617M966 614L979 602M1029 614L1043 602',
].join('');
const red = [
  'M888 380H1119Q1124 380 1124 385V423Q1124 428 1119 428H888Q883 428 883 423V385Q883 380 888 380Z',
  'M980 380V582Q980 587 985 587H1022Q1027 587 1027 582V380',
  'M880 402L858 381Q853 380 853 386V422Q853 428 858 427L880 407',
  'M1127 402L1148 381Q1156 379 1156 386V422Q1156 428 1148 427L1127 407',
  'M981 502L1002 481M1004 481L1025 502M983 508H1024',
  'M887 383L907 407M892 382L912 402M998.500 566L1021 587M1005 559L1027 582',
].join('');
const dots: [number, number, string][] = [
  [856, 384, '#ff0'], [856, 424, '#ff0'], [1151, 384, '#ff0'], [1151, 424, '#ff0'], [983, 583, '#ff0'], [1022, 583, '#ff0'],
  [888, 384, '#0ff'], [888, 424, '#0ff'], [983, 384, '#0ff'], [983, 424, '#0ff'], [1023, 384, '#0ff'], [1023, 424, '#0ff'], [1119, 384, '#0ff'], [1119, 424, '#0ff'],
  [935, 384, '#f0f'], [935, 424, '#f0f'], [1071, 384, '#f0f'], [1071, 424, '#f0f'], [983, 504, '#f0f'], [1022, 504, '#f0f'],
];
const dBar: [string, number][] = [['布角筋', 46], ['布边筋', 47], ['特殊布筋', 57], ['对齐钢筋', 58]];
const dBar2: [string, number][] = [['修改纵筋', 58], ['修改箍筋', 58], ['编辑弯钩', 58]];

const ScrollUp = () => <I $s={11} viewBox="0 0 10 10"><path d="M1.500 6.500L5 3l3.500 3.500" stroke="#555" strokeWidth="1.600" fill="none" /></I>;
const ScrollDown = () => <I $s={11} viewBox="0 0 10 10"><path d="M1.500 3.500L5 7l3.500-3.500" stroke="#555" strokeWidth="1.600" fill="none" /></I>;

const GRAD = 'linear-gradient(#fff,#eee)';

export default function App() {
  return (
    <Root>
      <Global />
      <TitleBar>
        <AppIcon />
        <TitleText>广联达BIM钢筋算量软件 GGJ2013 - [C:\Users\Administrator.PC-20141127NRHM\Desktop\白龙村-2016-08-25-13-27-07(2166版)_16G.GGJ12]</TitleText>
        <WinBtns>
          <WinBtn><I $s={11} viewBox="0 0 11 11"><path d="M0 5.500h11" stroke="#888" /></I></WinBtn>
          <WinBtn><I $s={11} viewBox="0 0 11 11"><path d="M.5 2.500h8v8h-8zM2.500 2.500v-2h8v8h-2" stroke="#888" fill="none" /></I></WinBtn>
          <WinBtn><I $s={11} viewBox="0 0 11 11"><path d="M.5.500l10 10M10.500.500l-10 10" stroke="#888" /></I></WinBtn>
        </WinBtns>
      </TitleBar>
      <Badge60>60</Badge60>

      <MenuBar>
        {menu.map(([t, w]) => <MenuItem key={t} $w={w}>{t}</MenuItem>)}
        <MenuItem $w={86}><DocGreen />新建变更<Caret $ml={5} /></MenuItem>
        <MenuItem $w={63}><Mascot />广小二</MenuItem>
        <Notice>多边形定义错误</Notice>
        <MenuItem $w={118} $gap={5}><UserI />13907298339<Caret $ml={0} /></MenuItem>
        <MenuItem $w={54}>造价豆:0</MenuItem>
        <Bell size={14} fill="#1f7fe0" color="#1f7fe0" />
        <More $ml="41px">»</More>
      </MenuBar>

      <Toolbar1>
        <Band $w={148}>
          <Tool $w={23}><NewDoc /></Tool>
          <Tool $w={35}><OpenF /><Caret $ml={0} /></Tool>
          <Tool $w={22}><Save /></Tool>
          <Sep $m={2} />
          <Tool $w={45}><Undo /><Caret $ml={0} /></Tool>
          <More>»</More>
        </Band>
        <Band $w={547}>
          <Tool $w={52}><Draw />绘图</Tool>
          <Tool $w={75}><SigmaI />汇总计算</Tool>
          <Tool $w={63}><CloudC />云检查</Tool>
          <Tool $w={75} $off><Gray d={GFlat} />平齐板顶</Tool>
          <Tool $w={75} $off><Gray d={GBino} />查找图元</Tool>
          <Tool $w={87} $off><Gray d={GGlass} />查看钢筋量</Tool>
          <Tool $w={107} $off><Gray d={GBatch} />批量选择</Tool>
          <More>»</More>
        </Band>
        <Band>
          <ViewCombo><I viewBox="0 0 16 16"><rect x="1" y="3" width="14" height="10" fill="#e8e8e8" stroke="#bbb" /></I>二维<Caret $ml={0} $c="#777" /></ViewCombo>
          <Tool $w={63} $off><Gray d={GBox} />俯视<Caret $ml={6} $c="#777" /></Tool>
          <Tool $w={75} $off><Gray d={GOrbit} />动态观察</Tool>
          <Tool $w={73} $off><Gray d={GLocal} />局部三维</Tool>
          <Sep $m={2} />
          <Tool $w={51} $off><Gray d={GZoom} />全屏</Tool>
          <Tool $w={63} $off><Gray d={GScale} />缩放<Caret $ml={5} $c="#777" /></Tool>
          <Tool $w={63} $off><Gray d={GPan} />平移<Caret $ml={5} $c="#777" /></Tool>
          <Tool $w={81} $off><Gray d={GRot} />屏幕旋转<Caret $ml={2} $c="#777" /></Tool>
          <Sep $m={3} />
          <Tool $w={82} $off><Gray d={GFloor} />选择楼层</Tool>
          <More $ml="auto" $mr={2}>»</More>
        </Band>
      </Toolbar1>

      <Body>
        <Nav>
          <NavHead>模块导航栏
            <NavHeadIcons><Pin /><CloseX /></NavHeadIcons>
          </NavHead>
          <NavBtn>工程设置</NavBtn>
          <NavBtn>绘图输入</NavBtn>
          <NavTools><PlusPlus /><MinusMinus /></NavTools>
          <TreeBox>
            {nav.map((n, i) => n.kind === 'f' ? (
              <Row key={i}>
                <ChevBox><Chev open={!!n.open} /></ChevBox>
                <Gap $w={6} />
                {n.open ? <FolderO /> : <FolderC />}
                <FolderName>{n.name}</FolderName>
              </Row>
            ) : (
              <Row key={i} $lv1 $lv2 $last={n.last}>
                <LeafWrap $sel={n.sel}>
                  {n.icon}
                  <LeafName><LabelT t={n.name} /></LeafName>
                </LeafWrap>
              </Row>
            ))}
          </TreeBox>
          <NavBtn $h={21}>单构件输入</NavBtn>
          <NavBtn $h={21}>报表预览</NavBtn>
        </Nav>
        <RightCol>
          <Toolbar2>
            <Tool $w={61}><NewIt />新建<Caret $ml={1} /></Tool>
            <Tool $w={49}><CrossI />删除</Tool>
            <Tool $w={51}><CopyI />复制</Tool>
            <Tool $w={63}><Rename />重命名</Tool>
            <Sep $m={0} />
            <FloorLabel>楼层</FloorLabel>
            <FloorBox>首层<Caret $ml={27} /></FloorBox>
            <Sep $m={4} />
            <Tool $w={60}><SortI />排序<Caret $ml={1} /></Tool>
            <Tool $w={58}><Funnel />过滤<Caret $ml={1} /></Tool>
            <Sep $m={0} $mr={5} />
            <Tool $w={138}><CopyFrom />从其他楼层复制构件</Tool>
            <Tool $w={132}><CopyTo />复制构件到其他楼层</Tool>
            <Sep $m={0} />
            <Tool $w={47}><ToolLabel $ml={8}>查找</ToolLabel><Caret $ml={0} /></Tool>
            <Sep $m={0} />
            <Tool $w={58}><Gap $w={4} /><Up />上移</Tool>
            <Tool $w={50}><Down /><ToolLabel $ml={3}>下移</ToolLabel></Tool>
          </Toolbar2>
          <Work>
            <TreeCol>
              <SearchRow>
                <SearchBox>搜索构件...</SearchBox>
                <Glass />
              </SearchRow>
              <CompBox>
                <CompList>
                  <CompRoot>
                    <Chev open s={11} />
                    <Gap $w={7} />
                    <Col />
                    <CompRootName>暗柱</CompRootName>
                  </CompRoot>
                  {comps.map(c => (
                    <CompRow key={c}>
                      <GearWrap><Gear /></GearWrap>
                      <CompName $sel={c === 'AZ-25'}>{c}</CompName>
                    </CompRow>
                  ))}
                </CompList>
                <Scroll $w={16}>
                  <SBtn $h={18}><ScrollUp /></SBtn>
                  <SThumb $h={496} />
                  <SFill />
                  <SBtn $h={18}><ScrollDown /></SBtn>
                </Scroll>
              </CompBox>
            </TreeCol>
            <PropCol>
              <TabStrip><TabOn>属性编辑</TabOn></TabStrip>
              <PropBody>
                <GridArea>
                  <GRow $h={23}>
                    <RowNum $w={21} />
                    <HeadCell $w={191} $bg={GRAD}>属性名称</HeadCell>
                    <HeadCell $w={126} $c="#7a0a78" $bg="linear-gradient(#fbdfa8,#f2bf62)">属性值</HeadCell>
                    <HeadCell $w={31} $bg={GRAD}>附加</HeadCell>
                  </GRow>
                  {rows.map(r => (
                    <GRow key={r.n}>
                      <RowNum $w={21} $hot={r.sel}>{r.n}</RowNum>
                      <Cell $w={191} $c={r.c} $pl={r.plus ? 0 : 20} $bg={r.sel ? '#0078d7' : '#fff'}>
                        {r.plus && <PlusBox>+</PlusBox>}<LabelT t={r.name} />
                      </Cell>
                      <Cell $w={126} $c={r.vc} $pl={2} $bg={r.sel ? '#d8e8f8' : '#fff'}>{r.val}</Cell>
                      <Cell $w={31}>{r.chk && <Check />}</Cell>
                    </GRow>
                  ))}
                </GridArea>
                <Scroll $w={17}>
                  <SBtn $h={24}><ScrollUp /></SBtn>
                  <SThumb $h={308} />
                  <SFill />
                  <SBtn $h={22}><ScrollDown /></SBtn>
                </Scroll>
              </PropBody>
            </PropCol>
          </Work>
        </RightCol>
      </Body>

      <Status>
        <SCell $w={148} />
        <SCell $w={78}><LabelT t="层高:4.5m" /></SCell>
        <SCell $w={98}><LabelT t="底标高:-0.03m" /></SCell>
        <SCell $w={48}><Lat>0</Lat></SCell>
        <SCell>名称在当前层当前构件类型下不允许重名</SCell>
        <SCell $w={70}><Lat>76.5 FPS</Lat></SCell>
      </Status>

      <Taskbar>
        <StartBtn><WinLogo /></StartBtn>
        <SearchTask>
          <Ring />在这里输入你要搜索的内容
          <MicBox><Mic size={16} /></MicBox>
        </SearchTask>
        <TaskIcons>
          <TaskIcon $w={48}><TaskView /></TaskIcon>
          <TaskIcon $w={51}><Fan /></TaskIcon>
          <TaskIcon $w={50}><Spiral /></TaskIcon>
          <TaskIcon $w={54}><FaEdge size={24} color="#0a78d8" /></TaskIcon>
          <TaskIcon $w={40}><Store /></TaskIcon>
          <TaskIcon $w={56}><FolderT /></TaskIcon>
          <TaskIcon $w={42}><FaInternetExplorer size={24} color="#2a9ae0" /></TaskIcon>
          <TaskIcon $w={38} $ml={7} $on><GTask /></TaskIcon>
          <TaskIcon $w={38} $ml={9} $on><GreenOrb /></TaskIcon>
          <TaskIcon $w={38} $ml={9} $on><NotesT /></TaskIcon>
          <TaskIcon $w={46} $ml={5} $on $active><AppIcon s={24} /></TaskIcon>
          <TaskIcon $w={38} $ml={5} $on><QTask /></TaskIcon>
        </TaskIcons>
        <Cpu>34%<br />CPU使用</Cpu>
        <Tray>
          <TraySlot $w={24}><ChevronUp size={16} /></TraySlot>
          <TraySlot $w={26}><BatteryI /></TraySlot>
          <TraySlot $w={24}><Wifi size={16} /></TraySlot>
          <TraySlot $w={18}><Volume1 size={16} /></TraySlot>
          <TraySlot $w={38}><Keyboard size={20} /></TraySlot>
          <TraySlot $w={18}>英</TraySlot>
          <TraySlot $w={40}><SLogo s={18} /></TraySlot>
        </Tray>
        <Clock>14:15<br />2017/10/25</Clock>
        <Notify>
          <I $s={16} viewBox="0 0 16 16"><path d="M1 1h14v11H1zM4 4h8M4 7h8M4 10h5" stroke="#fff" fill="none" /></I>
          <NotifyBadge>2</NotifyBadge>
        </Notify>
      </Taskbar>

      <SogouLogo><SLogo s={28} /></SogouLogo>
      <Sogou>
        <SogouSlot $w={18}>英</SogouSlot>
        <SogouSlot $w={22}>,</SogouSlot>
        <SogouSlot $w={23}><Mic size={15} strokeWidth={2.5} /></SogouSlot>
        <SogouSlot $w={24}><KeyB /></SogouSlot>
        <SogouSlot $w={26}><PersonG /></SogouSlot>
        <SogouSlot $w={18}><Shirt /></SogouSlot>
        <SogouSlot $w={22}><Wrench /></SogouSlot>
      </Sogou>

      <Dialog>
        <DTitle>截面编辑</DTitle>
        <DInner>
          <DTabs>
            <DTab>截面</DTab>
            <DTab $on>配筋</DTab>
          </DTabs>
          <DPanel>
            <DBar>
              <Grip />
              {dBar.map(([t, w]) => <DBarItem key={t} $w={w}>{t}</DBarItem>)}
              <DBarItem $w={44}>画箍筋</DBarItem>
              <Sep $m={0} $mr={7} />
              {dBar2.map(([t, w]) => <DBarItem key={t} $w={w}>{t}</DBarItem>)}
              <DBarItem $w={72}>端头伸缩</DBarItem>
              <More>»</More>
            </DBar>
            <DBar2><Grip />钢筋信息<RebarCombo>1C20<Caret $ml={0} $c="#777" /></RebarCombo></DBar2>
            <Canvas viewBox="806 244 526 424" shapeRendering="crispEdges">
              <g stroke="#4f4f4f" strokeDasharray="9 3 2 3" fill="none">
                {gridXs.map(x => <path key={x} d={`M${x} 246V666`} />)}
                <path d="M826 325H1184M823 484H1180M827 643H1184" />
              </g>
              <Ax x="849" y="492">-500</Ax>
              <Ax x="1005" y="492">0</Ax>
              <Ax x="1165" y="492">500</Ax>
              <path d={green} stroke="#00ff00" fill="none" />
              <path d="M844 372H1162V436H1035V595H971V436H844Z" stroke="#fff" strokeWidth="2" fill="none" />
              <path d={red} stroke="#ff0000" strokeWidth="3.500" fill="none" strokeLinejoin="round" />
              {dots.map(([x, y, c], i) => <circle key={i} cx={x} cy={y} r="2.500" stroke={c} fill="#000" shapeRendering="auto" />)}
              <path d="M1164 371L1196 339" stroke="#fff" />
              <Dim x="1003" y="352">1000</Dim>
              <Dim x="819" y="409">200</Dim>
              <Dim x="1188" y="409">200</Dim>
              <Dim x="908" y="466">400</Dim>
              <Dim x="1100" y="466">400</Dim>
              <Dim x="946" y="520">500</Dim>
              <Dim x="1060" y="520">500</Dim>
              <Dim x="1003" y="625">200</Dim>
              <Lbl x="1197" y="318">全部纵筋</Lbl>
              <Lbl x="1197" y="331">箍筋</Lbl>
              <Lbl x="1197" y="344">其它纵筋</Lbl>
              <Val x="1253" y="318">8C16+4C12</Val>
              <Val x="1252" y="331">C8@150</Val>
              <Val x="1253" y="344">8C16</Val>
              <path d="M807 245H1331V667H807Z" stroke="#ff0000" strokeWidth="3" fill="none" />
            </Canvas>
          </DPanel>
          <DStatus>
            <DCell $w={147}>坐标<Lat>&nbsp;(X: 79 Y: 793)</Lat></DCell>
            <DCell $w={384}><GripC /></DCell>
          </DStatus>
        </DInner>
      </Dialog>
    </Root>
  );
}
